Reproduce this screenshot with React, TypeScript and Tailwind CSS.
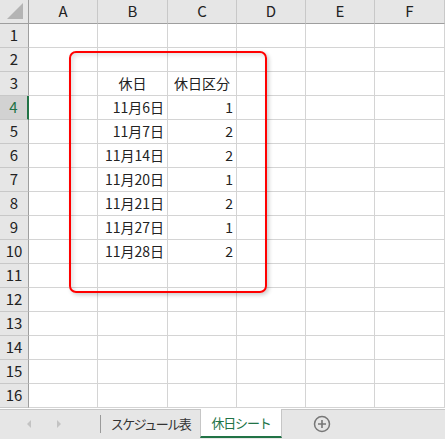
import React from 'react';

const cols = ['A', 'B', 'C', 'D', 'E', 'F'];
const colW = [69, 70, 69, 69, 69, 70];

const data: Record<number, [string, string, 'c' | 'r']> = {
  3: ['休日', '休日区分', 'c'],
  4: ['11月6日', '1', 'r'],
  5: ['11月7日', '2', 'r'],
  6: ['11月14日', '2', 'r'],
  7: ['11月20日', '1', 'r'],
  8: ['11月21日', '2', 'r'],
  9: ['11月27日', '1', 'r'],
  10: ['11月28日', '2', 'r'],
};

const font = { fontFamily: '"Noto Sans CJK JP", "Noto Sans", sans-serif' };

function Cell({ text, align }: { text?: string; align?: 'c' | 'r' }) {
  return (
    <div
      className={`h-6 border-r border-b border-[#d4d4d4] bg-white flex items-center text-[14px] text-[#222] px-[3px] ${
        align === 'c' ? 'justify-center' : 'justify-end'
      }`}
    >
      {text}
    </div>
  );
}

export default function App() {
  const rows = Array.from({ length: 16 }, (_, i) => i + 1);
  return (
    <div className="relative w-[445px] h-[439px] overflow-hidden bg-white select-none" style={font}>
      <div
        className="grid"
        style={{ gridTemplateColumns: `29px ${colW.map((w) => w + 'px').join(' ')}` }}
      >
        {/* corner */}
        <div className="h-6 bg-[#e6e6e6] border-r border-b border-[#9e9e9e] relative">
          <div className="absolute right-[5px] bottom-[4px] w-0 h-0 border-l-[16px] border-l-transparent border-b-[16px] border-b-[#b4b4b4]" />
        </div>
        {cols.map((c) => (
          <div
            key={c}
            className="h-6 bg-[#e6e6e6] border-r border-r-[#c8c8c8] border-b border-b-[#9e9e9e] flex items-center justify-center text-[15px] text-[#222]"
          >
            {c}
          </div>
        ))}
        {rows.map((r) => {
          const d = data[r];
          const sel = r === 4;
          return (
            <React.Fragment key={r}>
              <div
                className={`h-6 border-b border-b-[#c8c8c8] flex items-center justify-center text-[15px] ${
                  sel
                    ? 'bg-[#d2d2d2] text-[#217346] border-r-2 border-r-[#217346]'
                    : 'bg-[#e6e6e6] text-[#222] border-r border-r-[#9e9e9e]'
                }`}
              >
                {r}
              </div>
              <Cell />
              <Cell text={d?.[0]} align={d?.[2]} />
              <Cell text={d?.[1]} align={d?.[2]} />
              <Cell />
              <Cell />
              <Cell />
            </React.Fragment>
          );
        })}
      </div>

      {/* red highlight box */}
      <div className="absolute left-[69px] top-[51px] w-[198px] h-[242px] border-2 border-[#ff0000] rounded-[7px] shadow-[inset_2px_2px_5px_rgba(0,0,0,0.12),2px_2px_4px_rgba(0,0,0,0.2)] pointer-events-none" />

      {/* sheet tabs */}
      <div className="absolute left-0 right-0 top-[409px] h-[30px] bg-[#e6e6e6] border-t border-[#c6c6c6] flex items-start">
        <div className="w-[100px] h-[28px] flex items-center">
          <div className="ml-[27px] w-0 h-0 border-y-[4px] border-y-transparent border-r-[4px] border-r-[#c3c3c3]" />
          <div className="ml-[26px] w-0 h-0 border-y-[4px] border-y-transparent border-l-[4px] border-l-[#c3c3c3]" />
        </div>
        <div className="h-[28px] flex items-center">
          <div className="w-px h-[18px] bg-[#9a9a9a]" />
          <div className="w-[99px] flex items-center justify-center text-[13px] tracking-[-1.5px] text-[#333]">スケジュール表</div>
        </div>
        <div className="-mt-px w-[82px] h-[29px] bg-white border-x border-[#c6c6c6] border-b-2 border-b-[#217346] flex items-center justify-center text-[13px] tracking-[-1.2px] text-[#217346]">
          休日シート
        </div>
        <div className="ml-[31px] h-[28px] flex items-center">
          <svg width="18" height="18" viewBox="0 0 18 18">
            <circle cx="9" cy="9" r="7.5" fill="none" stroke="#777" strokeWidth="1.5" />
            <path d="M9 5v8M5 9h8" stroke="#777" strokeWidth="1.6" />
          </svg>
        </div>
      </div>
    </div>
  );
}
